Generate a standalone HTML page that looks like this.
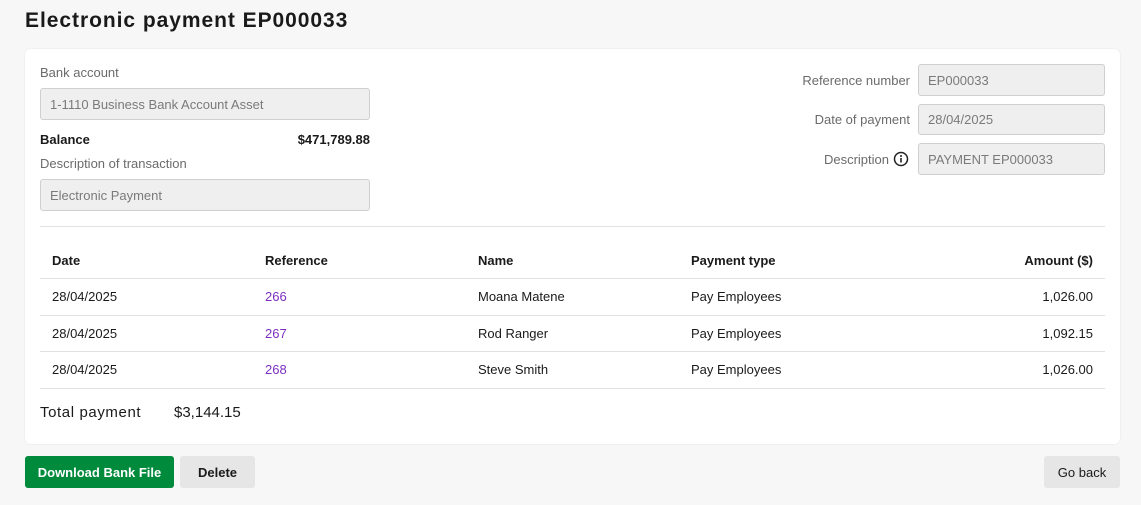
<!DOCTYPE html>
<html><head><style>
*{box-sizing:border-box;margin:0;padding:0}
body{width:1141px;height:505px;background:#f7f7f7;font-family:"Liberation Sans",sans-serif;color:#1a1a1a;position:relative;overflow:hidden;font-size:13px}
.abs{position:absolute}
h1{position:absolute;left:25px;top:9px;font-size:21px;font-weight:bold;letter-spacing:0.95px}
.card{position:absolute;left:25px;top:49px;width:1095px;height:395px;background:#fff;border-radius:6px;box-shadow:0 0 2px rgba(0,0,0,0.08)}
.lbl{color:#6b6b6b;font-size:13px}
.inp{position:absolute;background:#efefef;border:1px solid #cfcfcf;border-radius:3px;color:#7a7a7a;font-size:13px;padding-left:9px;display:flex;align-items:center}
.row{position:absolute;left:40px;width:1065px;border-top:1px solid #e2e2e2}
.c{position:absolute;font-size:13px}
.btn{position:absolute;top:456px;height:32px;border-radius:3px;font-size:13px;font-weight:bold;display:flex;align-items:center;justify-content:center}
</style></head><body>
<h1>Electronic payment EP000033</h1>
<div class="card"></div>
<div class="abs lbl" style="left:40px;top:65px">Bank account</div>
<div class="inp" style="left:40px;top:88px;width:330px;height:32px">1-1110 Business Bank Account Asset</div>
<div class="abs" style="left:40px;top:132px;font-weight:bold">Balance</div>
<div class="abs" style="right:771px;top:132px;font-weight:bold">$471,789.88</div>
<div class="abs lbl" style="left:40px;top:156px">Description of transaction</div>
<div class="inp" style="left:40px;top:179px;width:330px;height:32px">Electronic Payment</div>

<div class="abs lbl" style="right:231px;top:73px">Reference number</div>
<div class="inp" style="left:918px;top:64px;width:187px;height:32px">EP000033</div>
<div class="abs lbl" style="right:231px;top:112px">Date of payment</div>
<div class="inp" style="left:918px;top:104px;width:187px;height:31px">28/04/2025</div>
<div class="abs lbl" style="right:252px;top:152px">Description</div>
<svg class="abs" style="left:893px;top:151px" width="16" height="16" viewBox="0 0 16 16"><circle cx="8" cy="8" r="6.5" fill="none" stroke="#222" stroke-width="1.5"/><circle cx="8" cy="5" r="1" fill="#222"/><rect x="7.2" y="7" width="1.6" height="4.5" fill="#222"/></svg>
<div class="inp" style="left:918px;top:143px;width:187px;height:32px">PAYMENT EP000033</div>

<div class="row" style="top:226px"></div>
<div class="c" style="left:52px;top:253px;font-weight:bold">Date</div>
<div class="c" style="left:265px;top:253px;font-weight:bold">Reference</div>
<div class="c" style="left:478px;top:253px;font-weight:bold">Name</div>
<div class="c" style="left:691px;top:253px;font-weight:bold">Payment type</div>
<div class="c" style="right:48px;top:253px;font-weight:bold">Amount ($)</div>
<div class="row" style="top:278px"></div>
<div class="c" style="left:52px;top:289px">28/04/2025</div><div class="c" style="left:265px;top:289px;color:#7b2fbf">266</div><div class="c" style="left:478px;top:289px">Moana Matene</div><div class="c" style="left:691px;top:289px">Pay Employees</div><div class="c" style="right:48px;top:289px">1,026.00</div>
<div class="row" style="top:315px"></div>
<div class="c" style="left:52px;top:326px">28/04/2025</div><div class="c" style="left:265px;top:326px;color:#7b2fbf">267</div><div class="c" style="left:478px;top:326px">Rod Ranger</div><div class="c" style="left:691px;top:326px">Pay Employees</div><div class="c" style="right:48px;top:326px">1,092.15</div>
<div class="row" style="top:351px"></div>
<div class="c" style="left:52px;top:362px">28/04/2025</div><div class="c" style="left:265px;top:362px;color:#7b2fbf">268</div><div class="c" style="left:478px;top:362px">Steve Smith</div><div class="c" style="left:691px;top:362px">Pay Employees</div><div class="c" style="right:48px;top:362px">1,026.00</div>
<div class="row" style="top:388px"></div>
<div class="c" style="left:40px;top:404px;font-size:15px;letter-spacing:0.6px">Total payment</div>
<div class="c" style="left:174px;top:404px;font-size:15px">$3,144.15</div>

<div class="btn" style="left:25px;width:149px;background:#008a3c;color:#fff">Download Bank File</div>
<div class="btn" style="left:180px;width:75px;background:#e6e6e6">Delete</div>
<div class="btn" style="left:1044px;width:76px;background:#e6e6e6;font-weight:normal">Go back</div>
</body></html>
